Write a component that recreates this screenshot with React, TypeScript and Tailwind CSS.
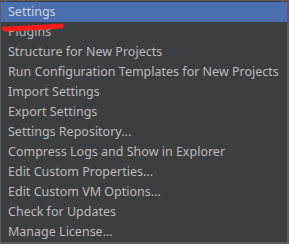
const items = [
  "Settings",
  "Plugins",
  "Structure for New Projects",
  "Run Configuration Templates for New Projects",
  "Import Settings",
  "Export Settings",
  "Settings Repository...",
  "Compress Logs and Show in Explorer",
  "Edit Custom Properties...",
  "Edit Custom VM Options...",
  "Check for Updates",
  "Manage License...",
];

export default function App() {
  return (
    <div className="relative w-[289px] h-[244px] bg-[#3c3f41] border border-[#5b5b5b] border-r-2 border-b-2 pt-px font-['Noto_Sans',sans-serif] text-[12.5px] text-[#bbbbbb]">
      <ul>
        {items.map((label, i) => (
          <li
            key={label}
            className={
              "h-[20px] flex items-center pl-[7px] whitespace-nowrap " +
              (i === 0 ? "bg-[#4b6eaf] text-[#d0d4dc]" : "")
            }
          >
            {label}
          </li>
        ))}
      </ul>
      {/* red marker stroke under the selected item */}
      <svg className="absolute left-0 top-[21px]" width="66" height="12" viewBox="0 0 66 12">
        <path d="M3.5 7 Q 30 6 60 4" stroke="#ff1a1a" strokeWidth="5" strokeLinecap="round" fill="none" />
      </svg>
    </div>
  );
}
